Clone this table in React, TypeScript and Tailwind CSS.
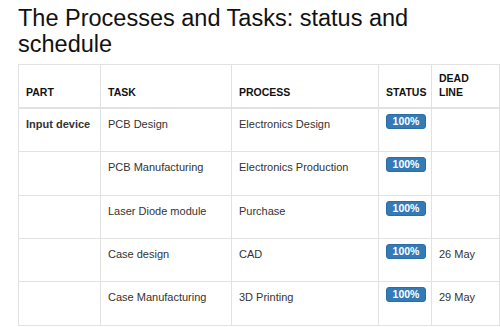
const ROWS = [
  { part: 'Input device', task: 'PCB Design', process: 'Electronics Design', deadline: '', h: 'h-[44px]' },
  { part: '', task: 'PCB Manufacturing', process: 'Electronics Production', deadline: '', h: 'h-[44px]' },
  { part: '', task: 'Laser Diode module', process: 'Purchase', deadline: '', h: 'h-[43px]' },
  { part: '', task: 'Case design', process: 'CAD', deadline: '26 May', h: 'h-[43px]' },
  { part: '', task: 'Case Manufacturing', process: '3D Printing', deadline: '29 May', h: 'h-[44px]' },
];

function Badge({ value }: { value: string }) {
  return (
    <span className="inline-block w-[40px] h-[15px] rounded-[3px] border border-[#2e6da4] bg-[#337ab7] text-white text-[10.5px] leading-[13px] font-bold text-center align-top">
      {value}
    </span>
  );
}

export default function App() {
  const th =
    'border border-[#e2e2e2] border-b-2 px-[7px] pb-[8px] align-bottom text-left text-[10.5px] leading-[14px] font-bold text-[#111]';
  const td =
    'border border-[#e2e2e2] px-[7px] pt-[7px] align-top text-[11px] leading-[16px] text-[#333]';

  return (
    <div
      className="bg-white w-[500px] h-[327px] overflow-hidden pl-[18px] pt-[5px]"
      style={{ fontFamily: '"Liberation Sans", Arial, sans-serif' }}
    >
      <h1 className="w-[440px] text-[23.5px] leading-[26px] font-normal text-[#111] mb-[7px]">
        The Processes and Tasks: status and schedule
      </h1>
      <table className="border-collapse table-fixed w-[481px]">
        <colgroup>
          <col className="w-[82px]" />
          <col className="w-[131px]" />
          <col className="w-[147px]" />
          <col className="w-[53px]" />
          <col className="w-[68px]" />
        </colgroup>
        <thead>
          <tr className="h-[43px]">
            <th className={th}>PART</th>
            <th className={th}>TASK</th>
            <th className={th}>PROCESS</th>
            <th className={th}>STATUS</th>
            <th className={th}>
              DEAD
              <br />
              LINE
            </th>
          </tr>
        </thead>
        <tbody>
          {ROWS.map((row) => (
            <tr key={row.task} className={row.h}>
              <td className={`${td} font-bold text-[#111]`}>{row.part}</td>
              <td className={td}>{row.task}</td>
              <td className={td}>{row.process}</td>
              <td className={`${td} !pt-[5px]`}>
                <Badge value="100%" />
              </td>
              <td className={td}>{row.deadline}</td>
            </tr>
          ))}
        </tbody>
      </table>
    </div>
  );
}
